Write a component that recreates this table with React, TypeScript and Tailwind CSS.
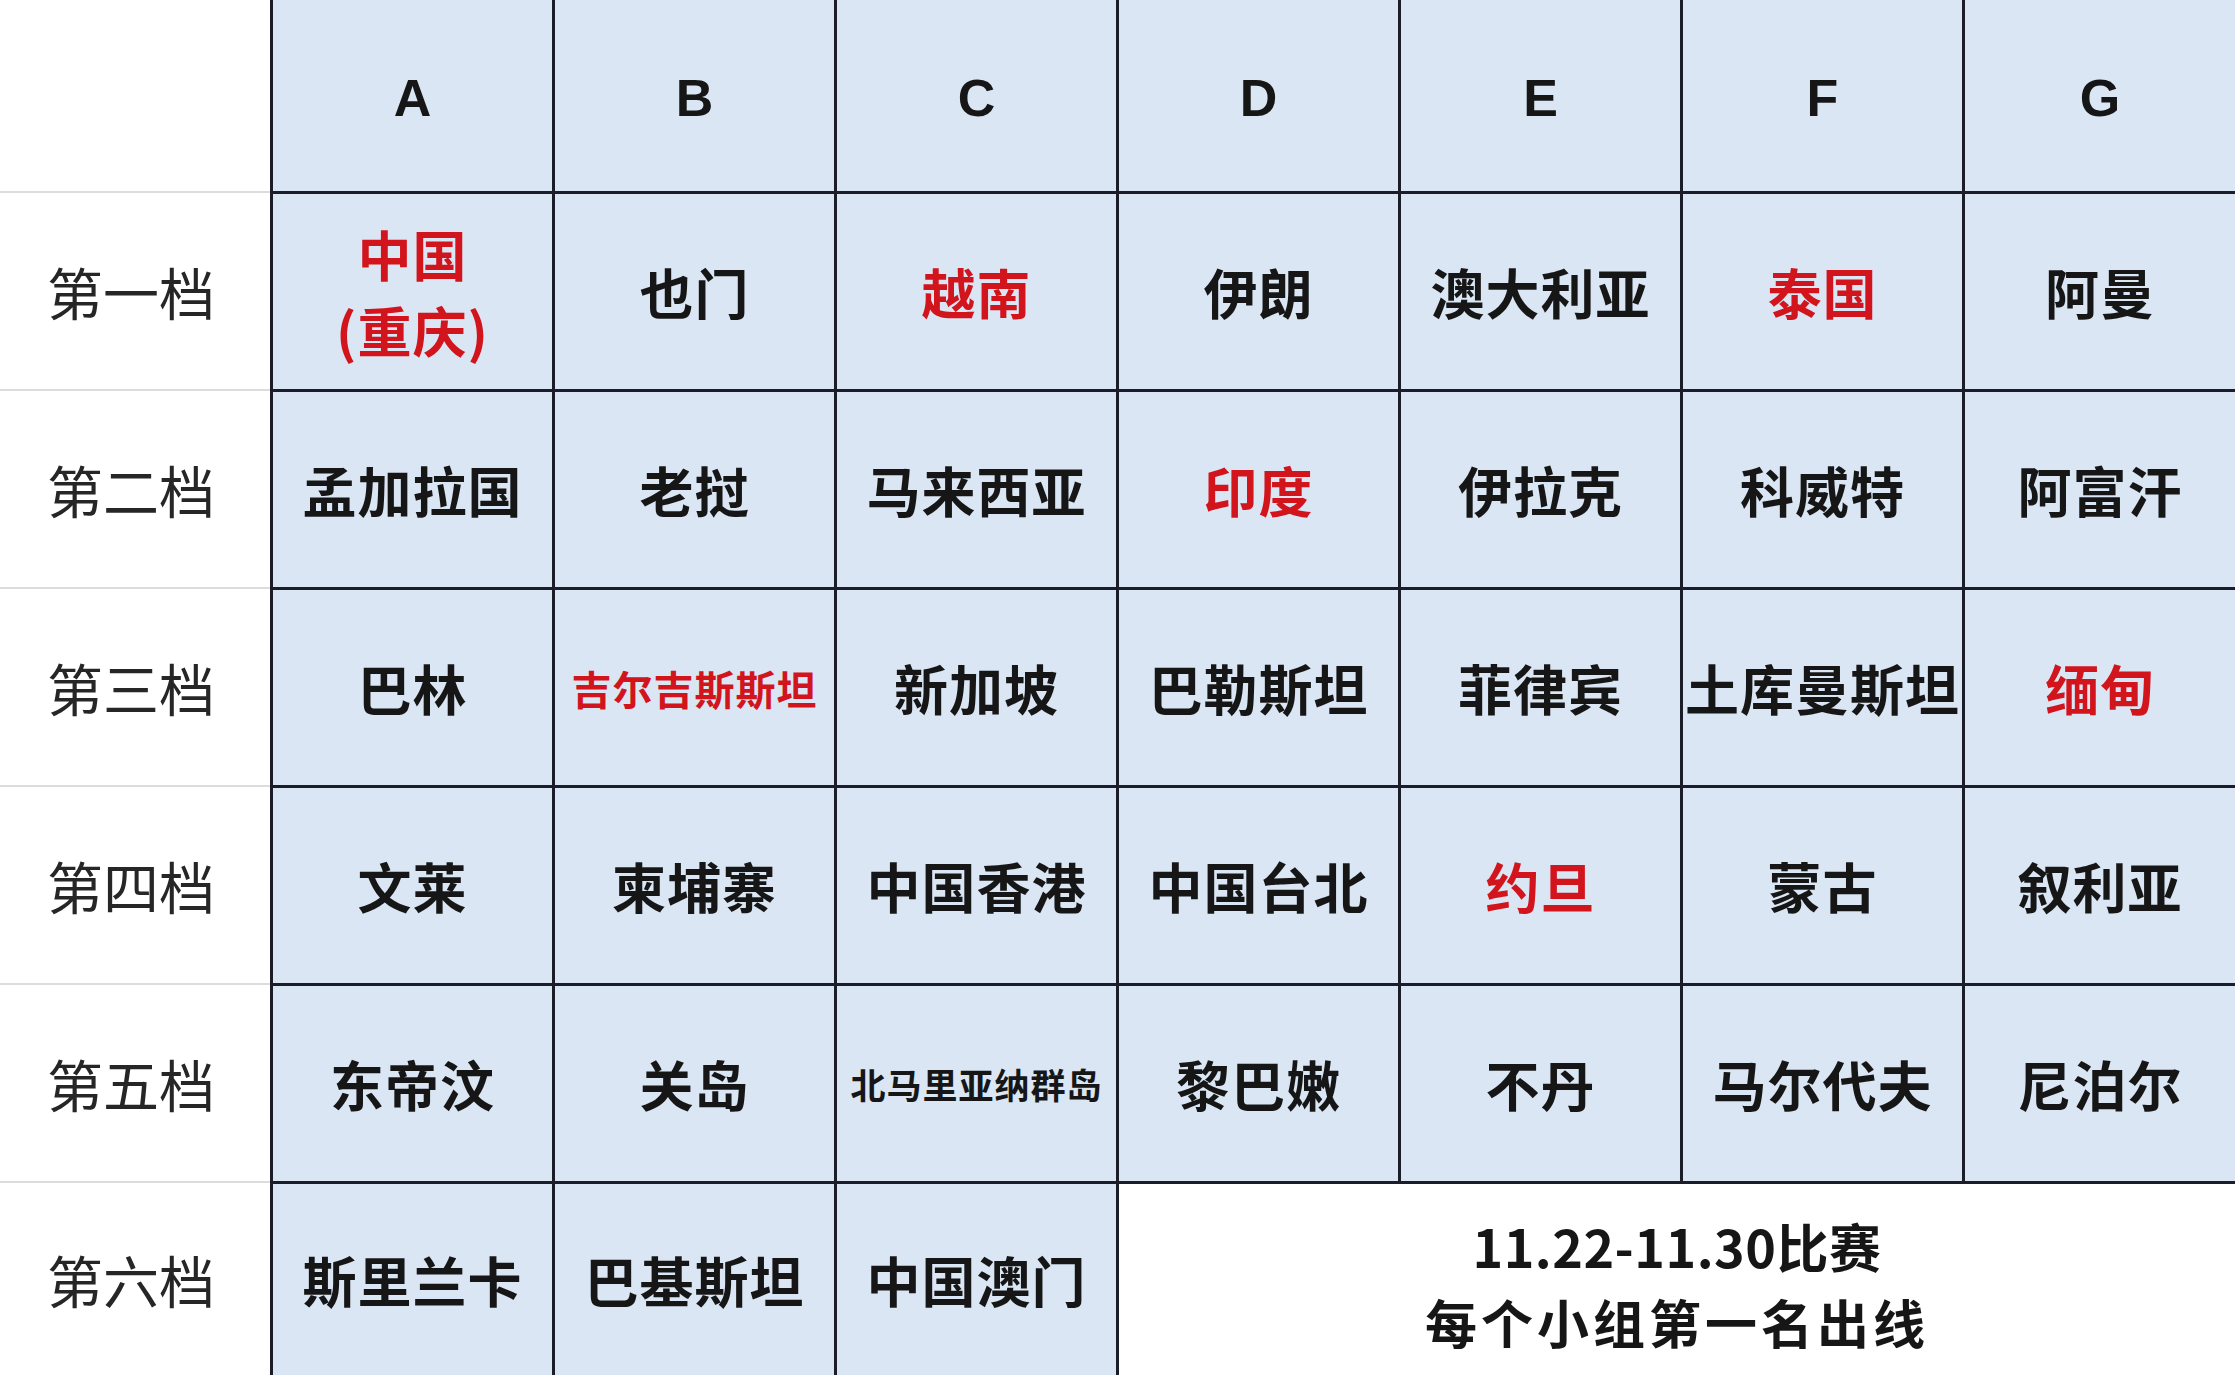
const cjk = "font-['Noto_Sans_CJK_SC','Noto_Sans',sans-serif]";

type Cell = { t: string; red?: boolean; size?: 'sm' | 'xs' };

const rows: { label: string; cells: Cell[] }[] = [
  {
    label: '第一档',
    cells: [
      { t: '中国\n(重庆)', red: true },
      { t: '也门' },
      { t: '越南', red: true },
      { t: '伊朗' },
      { t: '澳大利亚' },
      { t: '泰国', red: true },
      { t: '阿曼' },
    ],
  },
  {
    label: '第二档',
    cells: [
      { t: '孟加拉国' },
      { t: '老挝' },
      { t: '马来西亚' },
      { t: '印度', red: true },
      { t: '伊拉克' },
      { t: '科威特' },
      { t: '阿富汗' },
    ],
  },
  {
    label: '第三档',
    cells: [
      { t: '巴林' },
      { t: '吉尔吉斯斯坦', red: true, size: 'sm' },
      { t: '新加坡' },
      { t: '巴勒斯坦' },
      { t: '菲律宾' },
      { t: '土库曼斯坦' },
      { t: '缅甸', red: true },
    ],
  },
  {
    label: '第四档',
    cells: [
      { t: '文莱' },
      { t: '柬埔寨' },
      { t: '中国香港' },
      { t: '中国台北' },
      { t: '约旦', red: true },
      { t: '蒙古' },
      { t: '叙利亚' },
    ],
  },
  {
    label: '第五档',
    cells: [
      { t: '东帝汶' },
      { t: '关岛' },
      { t: '北马里亚纳群岛', size: 'xs' },
      { t: '黎巴嫩' },
      { t: '不丹' },
      { t: '马尔代夫' },
      { t: '尼泊尔' },
    ],
  },
];

const groups = ['A', 'B', 'C', 'D', 'E', 'F', 'G'];

function Label({ text }: { text: string }) {
  return (
    <div
      className={`flex items-center justify-center border-t-2 border-[#dcdcdc] bg-white pr-2 text-[56px] font-normal text-[#262626] ${cjk}`}
    >
      {text}
    </div>
  );
}

function BlueCell({ cell }: { cell: Cell }) {
  const size =
    cell.size === 'sm' ? 'text-[40px] font-semibold' : cell.size === 'xs' ? 'text-[35px] font-bold' : 'text-[54px] font-bold';
  return (
    <div
      className={`flex items-center justify-center whitespace-pre-line overflow-hidden border-l-[3px] border-t-[3px] border-[#1b1e28] bg-[#dae6f4] text-center leading-[76px] tracking-[1px] ${size} ${
        cell.red ? 'text-[#d2141c]' : 'text-[#161616]'
      } ${cjk}`}
    >
      {cell.t}
    </div>
  );
}

export default function App() {
  return (
    <div className="h-[1375px] w-[2235px] overflow-hidden bg-white">
      <div className="grid h-full grid-cols-[270px_repeat(6,282px)_1fr] grid-rows-[191px_repeat(5,198px)_1fr]">
        <div className="bg-white" />
        {groups.map((g) => (
          <div
            key={g}
            className="flex items-center justify-center border-l-[3px] border-[#1b1e28] bg-[#dae6f4] pt-1 font-['Liberation_Sans',sans-serif] text-[52px] font-bold text-[#161616]"
          >
            {g}
          </div>
        ))}

        {rows.map((r) => (
          <div key={r.label} className="contents">
            <Label text={r.label} />
            {r.cells.map((c, i) => (
              <BlueCell key={i} cell={c} />
            ))}
          </div>
        ))}

        <Label text="第六档" />
        <BlueCell cell={{ t: '斯里兰卡' }} />
        <BlueCell cell={{ t: '巴基斯坦' }} />
        <BlueCell cell={{ t: '中国澳门' }} />
        <div
          className={`col-span-4 flex flex-col items-center justify-center border-l-[3px] border-t-[3px] border-[#1b1e28] bg-white pt-2 text-center text-[52px] font-bold leading-[76px] text-[#161616] ${cjk}`}
        >
          <span className="tracking-[0.5px]">11.22-11.30比赛</span>
          <span className="tracking-[4px]">每个小组第一名出线</span>
        </div>
      </div>
    </div>
  );
}
